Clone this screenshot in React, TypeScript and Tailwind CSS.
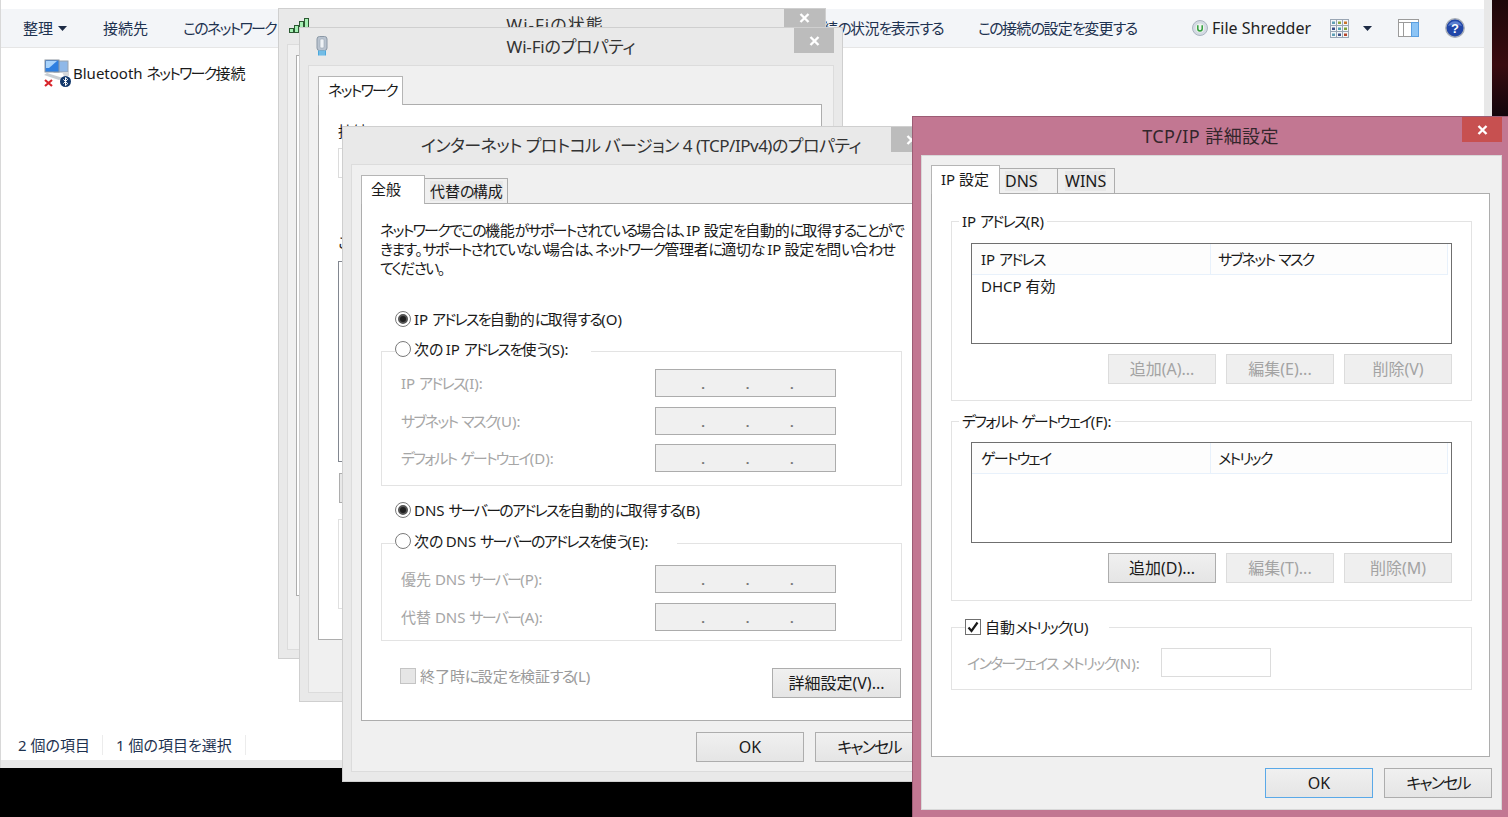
import React from 'react';

const FONT = "[font-family:'Noto_Sans','Noto_Sans_CJK_JP',sans-serif] [font-feature-settings:'palt']";

// the reference font has much narrower kana than Noto, so squeeze just the kana runs
const T: React.FC<{ s: string }> = ({ s }) => (
  <>
    {s.split(/([\u3040-\u30FF]+)/).map((part, i) =>
      i % 2 === 1 ? (
        <span key={i} className="tracking-[-0.115em]">{part}</span>
      ) : (
        <React.Fragment key={i}>{part}</React.Fragment>
      )
    )}
  </>
);

const CloseX: React.FC = () => (
  <svg width="11" height="10" viewBox="0 0 11 10">
    <path d="M1.5 1 L9.5 9 M9.5 1 L1.5 9" stroke="#fff" strokeWidth="2.4" />
  </svg>
);

const Caret: React.FC = () => (
  <svg width="9" height="5" viewBox="0 0 9 5">
    <path d="M0 0 H9 L4.5 5 Z" fill="#1d2b45" />
  </svg>
);

const NetworkIcon: React.FC = () => (
  <svg width="28" height="29" viewBox="0 0 28 29">
    <rect x="11" y="2" width="14" height="11" fill="#8fb8e8" stroke="#9aa3ad" />
    <rect x="2" y="1" width="14" height="12" fill="#2f7fe0" stroke="#8d96a0" />
    <path d="M3 2 L14 2 L6 9 L3 9Z" fill="#a9d3fb" />
    <path d="M4 14 L20 19 L16 21 L1 16Z" fill="#c9ced3" />
    <path d="M19 13 H26 V17 H21Z" fill="#d5d8db" />
    <path d="M2 21 L9 27 M9 21 L2 27" stroke="#d8242a" strokeWidth="2.2" />
    <circle cx="22.5" cy="22.5" r="5.5" fill="#12386b" />
    <path d="M20.3 20.4 L24.7 24.6 L22.5 26.6 V18.4 L24.7 20.4 L20.3 24.6" stroke="#fff" strokeWidth="1" fill="none" />
  </svg>
);

const SignalIcon: React.FC = () => (
  <svg width="21" height="15" viewBox="0 0 21 15">
    {[
      [1, 10, 4],
      [6, 7, 7],
      [11, 3, 11],
      [16, 0, 14],
    ].map(([x, y, h]) => (
      <rect key={x} x={x - 0.5} y={y + 0.5} width="4" height={h} fill="#a6f0b4" stroke="#2c5a32" />
    ))}
  </svg>
);

const UsbIcon: React.FC = () => (
  <svg width="12" height="20" viewBox="0 0 12 20">
    <rect x="1" y="0.5" width="10" height="14" rx="2.5" fill="#b9c3cf" stroke="#8b98a6" />
    <rect x="4" y="3" width="4" height="9" rx="1" fill="#eef2f6" stroke="#98a5b3" strokeWidth="0.6" />
    <rect x="2" y="14.5" width="8" height="5" fill="#4aa8dd" />
    <path d="M4 14.5 V20 M6 14.5 V20 M8 14.5 V20" stroke="#bfe3f5" strokeWidth="0.7" />
  </svg>
);

const ShredderIcon: React.FC = () => (
  <svg width="16" height="16" viewBox="0 0 16 16">
    <circle cx="8" cy="8" r="7.5" fill="#d3dae3" stroke="#aab4c0" />
    <circle cx="8" cy="8" r="4.5" fill="#eef3ee" />
    <path d="M5.8 5.2 V8.8 A2.2 2.2 0 0 0 10.2 8.8 V5.2" stroke="#2f9e3c" strokeWidth="1.5" fill="none" />
  </svg>
);

const GridIcon: React.FC = () => {
  const tiles = ['#5f9fb5', '#8aa83c', '#c8742a', '#3a4f86', '#4f9fb0', '#7da23a', '#5f9fb5', '#3a4f86', '#b5452c'];
  return (
    <svg width="19" height="19" viewBox="0 0 19 19">
      {tiles.map((c, i) => (
        <g key={i}>
          <rect x={0.5 + (i % 3) * 6} y={0.5 + Math.floor(i / 3) * 6} width="6" height="6" fill="#f3f6f8" stroke="#9aa6b4" />
          <rect x={2 + (i % 3) * 6} y={2.5 + Math.floor(i / 3) * 6} width="3" height="2.5" fill={c} />
        </g>
      ))}
    </svg>
  );
};

const PaneIcon: React.FC = () => (
  <svg width="21" height="18" viewBox="0 0 21 18">
    <rect x="0.5" y="0.5" width="20" height="17" fill="#fff" stroke="#9b9b9b" />
    <path d="M0.5 3.5 H20.5 M5.5 3.5 V17.5" stroke="#9b9b9b" />
    <rect x="13.5" y="3.5" width="7" height="14" fill="#8cc4f5" stroke="#5b9fe0" />
  </svg>
);

const HelpIcon: React.FC = () => (
  <svg width="20" height="20" viewBox="0 0 20 20">
    <circle cx="10" cy="10" r="9.2" fill="#2146a8" stroke="#a9afb8" strokeWidth="1.4" />
    <path d="M3 8 A7.5 7.5 0 0 1 17 8 Q10 5 3 8Z" fill="#5b7fd0" />
    <text x="10" y="15" textAnchor="middle" fontSize="13" fontWeight="700" fill="#fff" fontFamily="Liberation Sans">?</text>
  </svg>
);

const Radio: React.FC<{ checked?: boolean }> = ({ checked }) => (
  <span className="flex items-center justify-center w-[16px] h-[16px] rounded-full border border-[#7a7a7a] bg-white shrink-0">
    {checked && <span className="w-[10px] h-[10px] rounded-full bg-[#1f1f1f] border-2 border-[#555]" />}
  </span>
);

const Btn: React.FC<{ label: string; w?: string; disabled?: boolean; primary?: boolean }> = ({ label, w = 'w-[108px]', disabled, primary }) => (
  <button
    className={`${w} h-[30px] border text-[16px] shrink-0 flex items-center justify-center ${
      disabled
        ? 'border-[#dcdcdc] bg-[#efefef] text-[#a3a3a3]'
        : primary
          ? 'border-[#5aa9e8] bg-linear-to-b from-[#f0f0f0] to-[#e5e5e5] text-[#1a1a1a]'
          : 'border-[#adadad] bg-linear-to-b from-[#f0f0f0] to-[#e5e5e5] text-[#1a1a1a]'
    }`}
  >
    <T s={label} />
  </button>
);

const IpField: React.FC = () => (
  <div className="w-[181px] h-[28px] border border-[#acacac] bg-[#f0f0f0] grid grid-cols-3 pl-[25px] pr-[21px] text-[#777]">
    {[0, 1, 2].map(i => (
      <span key={i} className="flex justify-center items-end pb-[4px] text-[13px] leading-[16px] font-bold">.</span>
    ))}
  </div>
);

const IpRow: React.FC<{ label: string }> = ({ label }) => (
  <div className="flex items-center h-[28px] pl-[19px]">
    <span className="w-[254px] text-[#a6a6a6]"><T s={label} /></span>
    <IpField />
  </div>
);

const WinTab: React.FC<{ label: string; active?: boolean; w: string; latin?: string }> = ({ label, active, w, latin }) =>
  active ? (
    <div className={`${w} h-[29px] -mb-px relative border border-b-0 border-[#b5b5b5] bg-white flex items-center pl-[9px] pb-[3px] text-[#1a1a1a] whitespace-nowrap`}>
      <T s={label} />
    </div>
  ) : (
    <div className={`${w} h-[25px] border border-l-0 border-b-0 border-[#adadad] bg-[#f0f0f0] flex items-center pr-[2px] text-[#1a1a1a] whitespace-nowrap ${latin ?? 'pl-[5px]'}`}>
      <span className="bg-[#e8e8e8] leading-[20px]"><T s={label} /></span>
    </div>
  );

const ListBox: React.FC<{ cols: [string, string]; row?: string }> = ({ cols, row }) => (
  <div className="ml-[19px] w-[481px] h-[101px] border border-[#6f6f6f] bg-white">
    <div className="flex h-[31px] border-b border-[#e8f1fb] mr-[3px] bg-[#fdfdfd]">
      <div className="w-[239px] border-r border-[#e8f1fb] pl-[9px] flex items-center text-[#1a1a1a]"><span><T s={cols[0]} /></span></div>
      <div className="flex-1 border-r border-[#e8f1fb] pl-[7px] flex items-center text-[#1a1a1a]"><span><T s={cols[1]} /></span></div>
    </div>
    {row && <div className="pl-[9px] leading-[22px] text-[#1a1a1a]">{row}</div>}
  </div>
);

export default function App() {
  return (
    <div className={`relative w-[1508px] h-[817px] overflow-hidden bg-black text-[15px] leading-[20px] ${FONT}`}>
      {/* wallpaper */}
      <div className="absolute right-0 top-0 w-[16px] h-[130px] bg-linear-to-b from-[#1d0709] via-[#3a0b10] to-[#08040a]" />

      {/* explorer window */}
      <div className="absolute left-0 top-0 w-[1492px] h-[768px] bg-[#e8e8e8] border-l border-[#d8d8d8] pr-[8px] pb-[8px] flex flex-col">
        <div className="h-[9px] bg-white" />
        <div className="h-[39px] shrink-0 bg-[#f3f5f8] border-b border-[#e6e6e6] flex items-center text-[#1e3250] whitespace-nowrap">
          <span className="ml-[22px]">整理</span>
          <span className="ml-[5px]"><Caret /></span>
          <span className="ml-[36px]">接続先</span>
          <span className="ml-[35px] w-[600px]"><T s="このネットワーク デバイスを無効にする" /></span>
          <span className="w-[160px] text-right tracking-[-0.7px]"><T s="この接続の状況を表示する" /></span>
          <span className="ml-[35px] w-[160px] tracking-[-0.7px]"><T s="この接続の設定を変更する" /></span>
          <span className="ml-[54px]"><ShredderIcon /></span>
          <span className="ml-[4px] text-[16px] text-[#222]">File Shredder</span>
          <span className="ml-auto"><GridIcon /></span>
          <span className="ml-[14px]"><Caret /></span>
          <span className="ml-[26px]"><PaneIcon /></span>
          <span className="ml-[26px] mr-[19px]"><HelpIcon /></span>
        </div>
        <div className="flex-1 bg-white flex flex-col">
          <div className="flex items-center pl-[42px] pt-[11px] gap-[2px] text-[#1a1a1a]">
            <NetworkIcon />
            <span className="-mt-[2px]"><T s="Bluetooth ネットワーク接続" /></span>
          </div>
          <div className="mt-auto mb-[5px] flex items-center h-[20px] text-[#1e3250]">
            <span className="pl-[17px] pr-[12px] border-r border-[#ececec]">2 個の項目</span>
            <span className="pl-[13px] pr-[13px] border-r border-[#ececec]">1 個の項目を選択</span>
          </div>
        </div>
      </div>

      {/* Wi-Fi status window */}
      <div className="absolute left-[278px] top-[8px] w-[548px] h-[651px] bg-[#e9e9e9] border border-[#cfcfcf] flex flex-col">
        <div className="h-[35px] shrink-0 relative flex justify-center pt-[6px] pl-[6px] text-[17px] tracking-[1px] text-[#333]">
          <span className="absolute left-[10px] top-[9px]"><SignalIcon /></span>
          Wi-Fiの状態
          <span className="absolute right-0 top-0 w-[41px] h-[18px] bg-[#bcbcbc] flex items-center justify-center"><CloseX /></span>
        </div>
        <div className="ml-[8px] flex-1 mb-[8px] mr-[8px] bg-[#f0f0f0] border border-[#dcdcdc] pl-[8px] pt-[10px]">
          <div className="h-[541px] border border-[#adadad] bg-white" />
        </div>
      </div>

      {/* Wi-Fi properties window */}
      <div className="absolute left-[299px] top-[27px] w-[544px] h-[675px] bg-[#e9e9e9] border border-[#cfcfcf] flex flex-col">
        <div className="h-[37px] shrink-0 relative flex items-center justify-center text-[17px] text-[#333] tracking-[-0.2px]">
          <span className="absolute left-[16px] top-[8px]"><UsbIcon /></span>
          Wi-Fiのプロパティ
          <span className="absolute right-[8px] top-0 w-[40px] h-[25px] bg-[#bcbcbc] flex items-center justify-center"><CloseX /></span>
        </div>
        <div className="ml-[8px] flex-1 mb-[8px] mr-[8px] bg-[#f0f0f0] border border-[#dcdcdc] px-[9px] pt-[10px] flex flex-col">
          <div className="flex">
            <WinTab label="ネットワーク" active w="w-[85px]" />
          </div>
          <div className="w-[504px] h-[536px] border border-[#adadad] bg-white pl-[19px] flex flex-col items-start">
            <span className="mt-[16px] text-[#1a1a1a]">接続</span>
            <div className="mt-[7px] w-[100px] h-[30px] border border-[#dcdcdc]" />
            <span className="mt-[54px] text-[#1a1a1a]">この</span>
            <div className="mt-[9px] w-[100px] h-[201px] border border-[#828790]" />
            <div className="mt-[11px] w-[100px] h-[30px] ml-px border border-[#adadad] bg-[#e8e8e8]" />
            <div className="mt-[16px] w-[100px] h-[90px] border border-[#e0e0e0]" />
          </div>
        </div>
      </div>

      {/* IPv4 properties window */}
      <div className="absolute left-[342px] top-[126px] w-[590px] h-[656px] bg-[#e9e9e9] border border-[#cfcfcf] flex flex-col text-[#1a1a1a]">
        <div className="h-[37px] shrink-0 relative flex items-center justify-center pl-[8px] text-[17px] text-[#333] tracking-[-0.5px]">
          インターネット プロトコル バージョン 4 (TCP/IPv4)のプロパティ
          <span className="absolute right-0 top-0 w-[40px] h-[25px] bg-[#bcbcbc] flex items-center justify-center"><CloseX /></span>
        </div>
        <div className="ml-[8px] flex-1 mb-[9px] mr-[8px] bg-[#f0f0f0] border border-[#dcdcdc] px-[9px] pt-[10px] flex flex-col">
          <div className="flex items-end">
            <WinTab label="全般" active w="w-[64px]" />
            <WinTab label="代替の構成" w="w-[83px]" />
          </div>
          <div className="h-[518px] border border-[#adadad] bg-white px-[18px] shrink-0">
            <p className="pt-[17px] leading-[19px] whitespace-nowrap tracking-[-0.25px]">
              <T s="ネットワークでこの機能がサポートされている場合は、IP 設定を自動的に取得することがで" />
              <br />
              <T s="きます。サポートされていない場合は、ネットワーク管理者に適切な IP 設定を問い合わせ" />
              <br />
              <T s="てください。" />
            </p>
            <div className="mt-[30px] ml-[15px] h-[22px] flex items-center gap-[3px]">
              <Radio checked />
              <span><T s="IP アドレスを自動的に取得する(O)" /></span>
            </div>
            <fieldset className="mt-[10px] ml-px h-[146px] w-[521px] border border-[#e3e3e3]">
              <legend className="ml-[13px] pr-[22px] h-[22px] flex items-center bg-white">
                <span className="-translate-y-[2px] flex items-center gap-[3px]">
                  <Radio />
                  <span><T s="次の IP アドレスを使う(S):" /></span>
                </span>
              </legend>
              <div className="pt-[7px] flex flex-col gap-[9.5px]">
                <IpRow label="IP アドレス(I):" />
                <IpRow label="サブネット マスク(U):" />
                <IpRow label="デフォルト ゲートウェイ(D):" />
              </div>
            </fieldset>
            <div className="mt-[13px] ml-[15px] h-[22px] flex items-center gap-[3px]">
              <Radio checked />
              <span><T s="DNS サーバーのアドレスを自動的に取得する(B)" /></span>
            </div>
            <fieldset className="mt-[11px] ml-px h-[109px] w-[521px] border border-[#e3e3e3]">
              <legend className="ml-[13px] pr-[28px] h-[22px] flex items-center bg-white">
                <span className="-translate-y-[2px] flex items-center gap-[3px]">
                  <Radio />
                  <span><T s="次の DNS サーバーのアドレスを使う(E):" /></span>
                </span>
              </legend>
              <div className="pt-[11px] flex flex-col gap-[9.5px]">
                <IpRow label="優先 DNS サーバー(P):" />
                <IpRow label="代替 DNS サーバー(A):" />
              </div>
            </fieldset>
            <div className="mt-[27px] ml-px w-[520px] flex items-center">
              <div className="ml-[19px] -mt-[14px] flex items-center gap-[4px]">
                <span className="w-[16px] h-[16px] border border-[#c4c4c4] bg-[#e6e6e6]" />
                <span className="text-[#9a9a9a]"><T s="終了時に設定を検証する(L)" /></span>
              </div>
              <span className="ml-auto"><Btn label="詳細設定(V)..." w="w-[129px]" /></span>
            </div>
          </div>
          <div className="mt-[11px] -mr-[10px] flex justify-end gap-[11px]">
            <Btn label="OK" />
            <Btn label="キャンセル" />
          </div>
        </div>
      </div>

      {/* advanced TCP/IP window */}
      <div className="absolute left-[912px] top-[116px] w-[596px] h-[701px] bg-[#c27792] border-t border-l border-[#9c5c74] flex flex-col text-[#1a1a1a]">
        <div className="h-[38px] shrink-0 relative flex items-center justify-center text-[18px] tracking-[0.4px] text-[#33262b]">
          TCP/IP 詳細設定
          <span className="absolute right-[6px] top-0 w-[40px] h-[25px] bg-[#c75050] flex items-center justify-center"><CloseX /></span>
        </div>
        <div className="ml-[8px] w-[581px] h-[655px] bg-[#f0f0f0] border border-[#d8d8d8] px-[9px] pt-[9px] flex flex-col">
          <div className="flex items-end">
            <WinTab label="IP 設定" active w="w-[69px]" />
            <WinTab label="DNS" w="w-[58px]" latin="pl-[5px] text-[16px]" />
            <WinTab label="WINS" w="w-[57px]" latin="pl-[7px] text-[16px]" />
          </div>
          <div className="w-[559px] h-[564px] shrink-0 border border-[#adadad] bg-white pl-[19px]">
            <fieldset className="mt-[16px] w-[521px] h-[191px] border border-[#e3e3e3]">
              <legend className="ml-[7px] px-[3px] h-[22px] flex items-center bg-white"><span><T s="IP アドレス(R)" /></span></legend>
              <div className="pt-[11px]">
                <ListBox cols={['IP アドレス', 'サブネット マスク']} row="DHCP 有効" />
              </div>
              <div className="mt-[10px] ml-[156px] flex gap-[10px]">
                <Btn label="追加(A)..." disabled />
                <Btn label="編集(E)..." disabled />
                <Btn label="削除(V)" disabled />
              </div>
            </fieldset>
            <fieldset className="mt-[9px] w-[521px] h-[191px] border border-[#e3e3e3]">
              <legend className="ml-[7px] px-[3px] h-[22px] flex items-center bg-white"><span><T s="デフォルト ゲートウェイ(F):" /></span></legend>
              <div className="pt-[10px]">
                <ListBox cols={['ゲートウェイ', 'メトリック']} />
              </div>
              <div className="mt-[10px] ml-[156px] flex gap-[10px]">
                <Btn label="追加(D)..." />
                <Btn label="編集(T)..." disabled />
                <Btn label="削除(M)" disabled />
              </div>
            </fieldset>
            <fieldset className="mt-[15px] w-[521px] h-[74px] border border-[#e3e3e3]">
              <legend className="ml-[13px] pr-[20px] h-[22px] flex items-center gap-[4px] bg-white">
                <span className="w-[16px] h-[16px] border border-[#6f6f6f] bg-white flex items-center justify-center">
                  <svg width="12" height="12" viewBox="0 0 12 12">
                    <path d="M1.5 6.5 L4.5 10 L10.5 1.5" stroke="#1a1a1a" strokeWidth="2.2" fill="none" />
                  </svg>
                </span>
                <span><T s="自動メトリック(U)" /></span>
              </legend>
              <div className="pl-[15px] pt-[10px] flex items-center">
                <span className="w-[194px] text-[#a6a6a6] whitespace-nowrap"><T s="インターフェイス メトリック(N):" /></span>
                <span className="w-[110px] h-[29px] border border-[#dcdcdc]" />
              </div>
            </fieldset>
          </div>
          <div className="mt-[11px] w-[561px] flex justify-end gap-[11px]">
            <Btn label="OK" primary />
            <Btn label="キャンセル" />
          </div>
        </div>
      </div>
    </div>
  );
}
